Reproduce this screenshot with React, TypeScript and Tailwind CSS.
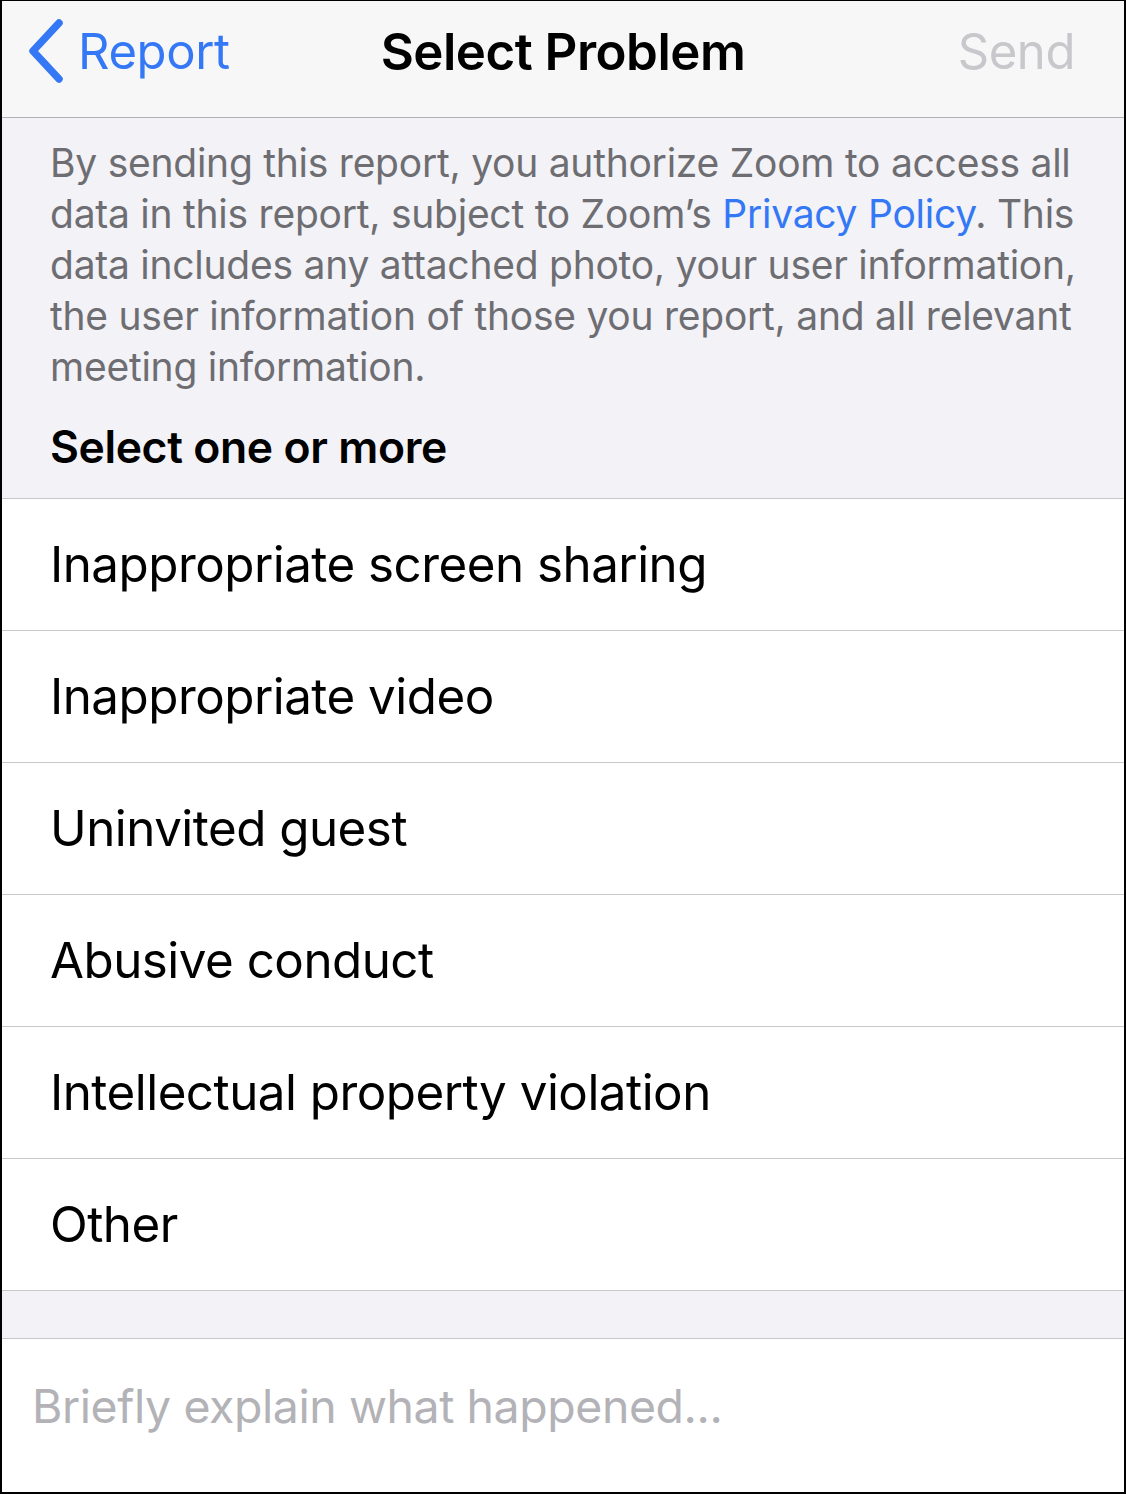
const problems = [
  "Inappropriate screen sharing",
  "Inappropriate video",
  "Uninvited guest",
  "Abusive conduct",
  "Intellectual property violation",
  "Other",
];

function BackChevron() {
  return (
    <svg viewBox="0 0 40 66" className="h-[66px] w-[40px]" fill="none">
      <path
        d="M33 5 L7 33 L33 61"
        stroke="currentColor"
        strokeWidth={7.5}
        strokeLinecap="round"
        strokeLinejoin="round"
      />
    </svg>
  );
}

export default function App() {
  return (
    <div
      className="box-border flex h-[1494px] w-[1126px] flex-col overflow-hidden border-t border-r-2 border-b-2 border-l-2 border-black bg-white"
      style={{ fontFamily: "Inter, 'Noto Sans', sans-serif" }}
    >
      {/* nav bar */}
      <header className="relative flex h-[117px] shrink-0 items-center border-b border-[#b1b1b4] bg-[#f7f7f7] pb-[16px]">
        <div className="flex items-center pl-[24px] text-[#3478f6]">
          <BackChevron />
          <span className="ml-[12px] text-[49px] leading-none tracking-[-0.4px]">Report</span>
        </div>
        <h1 className="absolute top-[25px] left-1/2 -translate-x-1/2 text-[51px] leading-none font-semibold tracking-[-0.5px] text-black">
          Select Problem
        </h1>
        <span className="ml-auto pr-[49px] text-[49px] leading-none tracking-[-0.4px] text-[#c7c7cc]">
          Send
        </span>
      </header>

      {/* notice */}
      <section className="h-[381px] shrink-0 border-b border-[#c8c7cc] bg-[#f2f2f7] px-[48px] pt-[19px]">
        <p className="text-[39px] leading-[51px] tracking-[-0.25px] whitespace-nowrap text-[#6d6d72]">
          By sending this report, you authorize Zoom to access all
          <br />
          data in this report, subject to Zoom’s{" "}
          <span className="text-[#3478f6]">Privacy Policy</span>. This
          <br />
          data includes any attached photo, your user information,
          <br />
          the user information of those you report, and all relevant
          <br />
          meeting information.
        </p>
        <div className="mt-[33px] text-[44.5px] leading-none font-semibold tracking-[-0.4px] text-black">
          Select one or more
        </div>
      </section>

      {/* problem list */}
      <ul className="shrink-0">
        {problems.map((p) => (
          <li
            key={p}
            className="flex h-[132px] items-center border-b border-[#c8c7cc] pl-[48px] text-[49.3px] tracking-[-0.5px] text-black"
          >
            {p}
          </li>
        ))}
      </ul>

      <div className="h-[48px] shrink-0 border-b border-[#c8c7cc] bg-[#f2f2f7]" />

      {/* description */}
      <div className="flex-1 px-[30px] pt-[44px] text-[46.4px] leading-none tracking-[-0.4px] text-[#b2b2b7]">
        Briefly explain what happened...
      </div>
    </div>
  );
}
